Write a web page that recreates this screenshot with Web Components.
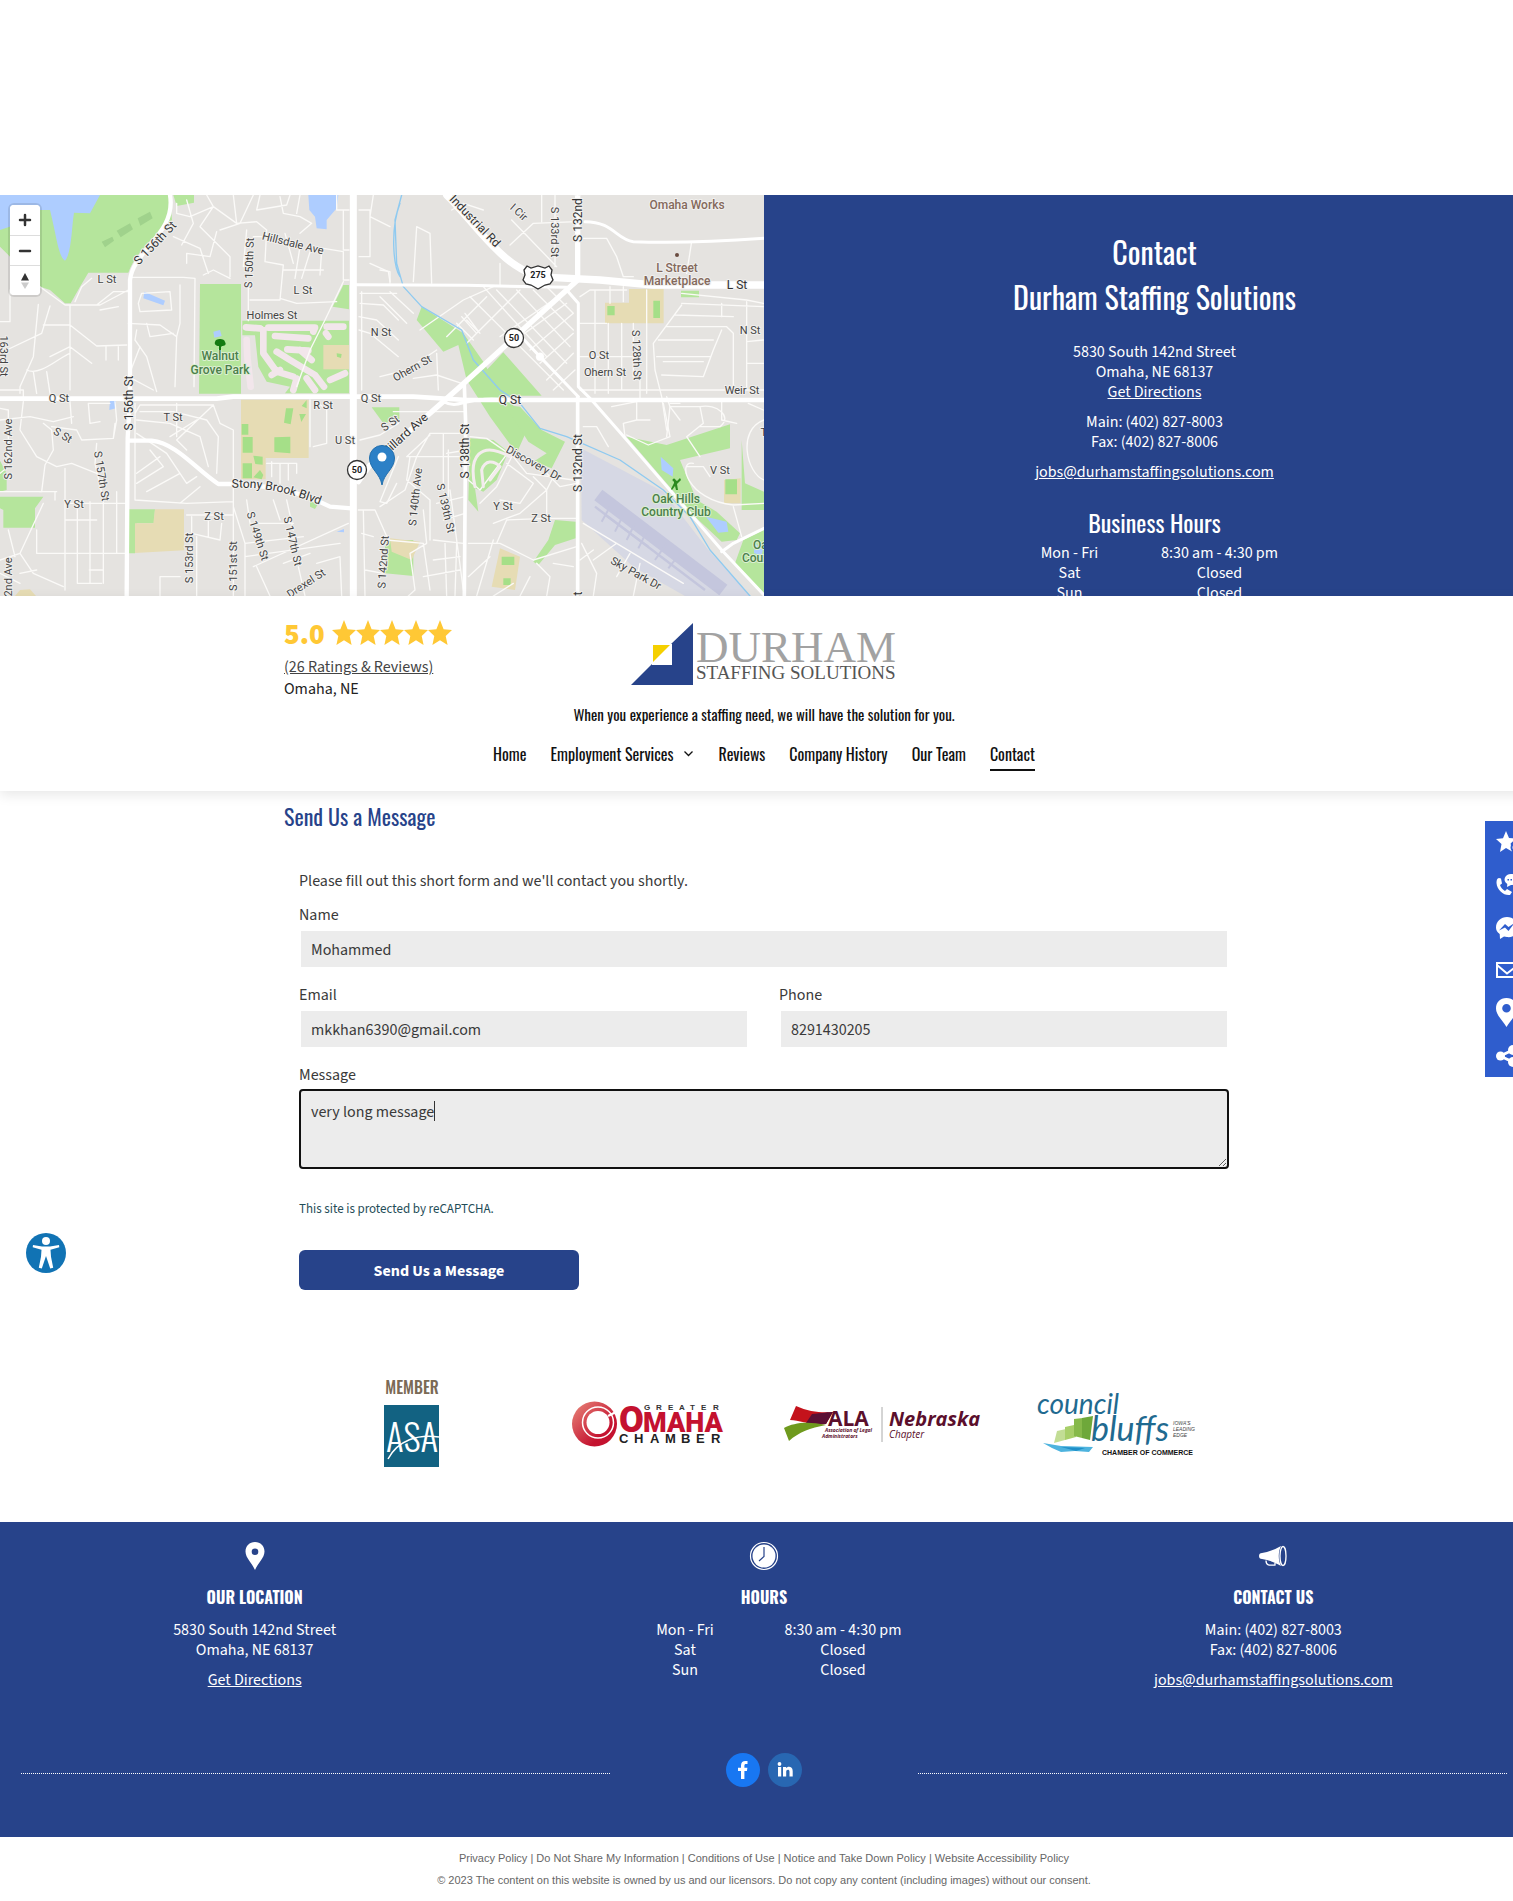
<!DOCTYPE html>
<html lang="en">
<head>
<meta charset="utf-8">
<meta name="viewport" content="width=device-width, initial-scale=1">
<title>Contact | Durham Staffing Solutions</title>
<style>
:root{--blue:#27438a;--rail:#2f5dcd;--body:"Source Sans Pro","Source Sans 3","Noto Sans CJK SC",sans-serif;--head:"Oswald","Liberation Sans Narrow","Noto Sans CJK SC",sans-serif}
html{overflow-x:hidden;background:#fff}
body{margin:0;width:calc(100% + 15px);position:relative;overflow-x:hidden;font:16px/20px var(--body);color:#3a3a3a}
main{display:block;padding-top:195px}
.top{display:grid;grid-template:401px / 1fr 1fr;overflow:hidden}
</style>
</head>
<body>
<main>
  <div class="top"><area-map></area-map><contact-panel></contact-panel></div>
  <site-header></site-header>
  <message-form></message-form>
  <partner-logos></partner-logos>
</main>
<site-footer></site-footer>
<legal-links></legal-links>
<action-rail></action-rail>
<access-button></access-button>

<script>
const define = (name, html, ready) => customElements.define(name, class extends HTMLElement {
  constructor() {
    super();
    const t = document.createElement('template');
    t.innerHTML = html;
    this.attachShadow({ mode: 'open' }).append(t.content.cloneNode(true));
  }
  connectedCallback() { if (ready) ready(this, this.shadowRoot); }
});

/* ---------- map ---------- */
const labels = [
  ['S 156th St',155,48,-46,'m'],['Hillsdale Ave',293,48,14],['S 150th St',249,68,-88],['L St',107,84,0],['L St',303,95,0],
  ['Holmes St',272,120,0],['N St',381,137,0],['Walnut',220,161,0,'p'],['Grove Park',220,175,0,'p'],['Q St',59,203,0],
  ['Q St',371,203,0],['S 156th St',129,208,-90,'m'],['R St',323,210,0],['T St',173,222,0],['S St',63,240,30],
  ['U St',345,245,0],['S St',390,228,-35],['S 162nd Ave',8,254,-90],['S 157th St',102,281,81],
  ['Y St',74,309,0],['Z St',214,321,0],['S 149th St',258,341,72],['S 147th St',293,346,77],
  ['S 153rd St',189,363,-90],['S 151st St',233,371,-90],['S 142nd St',383,367,-86],['2nd Ave',8,382,-90],['Drexel St',306,388,-33],
  ['163rd St',4,161,90],['I Cir',519,17,42],['Industrial Rd',475,26,46,'m'],['S 133rd St',555,37,90],['S 132nd St',578,18,-90,'m'],
  ['Omaha Works',687,10,0,'b'],['L Street',677,73,0,'b'],['Marketplace',677,86,0,'b'],['L St',737,90,0,'m'],['N St',750,135,0],
  ['O St',599,160,0],['Ohern St',605,177,0],['S 128th St',637,160,88],['Weir St',742,195,0],['Ohern St',412,173,-29],
  ['Q St',510,205,0,'m'],['Millard Ave',404,240,-42,'m'],['S 138th St',465,256,-90,'m'],['S 132nd St',578,268,-90,'m'],
  ['Discovery Dr',534,268,29],['V St',720,275,0],['S 140th Ave',415,302,-84],['S 139th St',446,313,77],['Y St',503,311,0],
  ['Z St',541,323,0],['Oak Hills',676,304,0,'p'],['Country Club',676,317,0,'p'],['Oak Hills',777,350,0,'p'],['Country',763,363,0,'p'],
  ['Sky Park Dr',636,378,29],['T St',770,237,0],['St',578,402,-90,'m']
];
define('area-map', `
<style>
:host{display:block;position:relative;overflow:hidden;background:#e5e3e0;min-width:0}
svg.map{display:block;width:100%;height:100%}
text{font:400 11px Roboto,sans-serif;fill:#444;text-anchor:middle;paint-order:stroke;stroke:#f1f0ee;stroke-width:2px;stroke-linejoin:round}
text.m{font-size:12px;fill:#333}
text.p{font-size:12px;font-weight:500;fill:#4b7f4b;stroke:#dcefd2}
text.b{font-size:12px;font-weight:500;fill:#84695c}
text.s{font-weight:700;font-size:9px;stroke:none;fill:#222}
.zoom{position:absolute;left:10px;top:10px;display:flex;flex-direction:column;background:#fff;border-radius:4px;box-shadow:0 0 0 2px #0000001a;overflow:hidden}
button{width:30px;height:30px;padding:0;border:0;background:#fff;display:grid;place-items:center}
button+button{border-top:1px solid #ddd}
</style>
<svg class="map" viewBox="0 0 764 401" preserveAspectRatio="xMidYMid slice" role="img" aria-label="Street map of Omaha">
<g transform="scale(.33333) translate(0 -15)" fill="none" stroke-linecap="round" stroke-linejoin="round">
  <g fill="#b5e59c">
    <path d="M0 15H510L516 90C470 130 405 190 385 248H265L240 290 212 340H195L150 300 120 290 0 170Z"/>
    <path d="M520 15H582V38L530 48Z"/>
    <path d="M600 282H723V611H597Z"/>
    <path d="M1030 285H1047V358L998 350Z"/>
    <path d="M727 392H1047V610H855L870 590 800 575 775 530 765 436H727Z"/>
    <path d="M0 812L20 850V900L0 905ZM0 920H130L105 955V1013H10V960L0 955Z"/>
    <path d="M1115 652H1198V690L1150 700Z"/>
    <path d="M387 958H465L462 1000 410 1000 405 1090H387Z"/>
    <path d="M930 935L955 940 945 957 930 950ZM1155 1050H1240V1158L1155 1150Z"/>
    <path d="M1205 290L1265 350 1390 430 1450 515 1500 605 1590 700 1550 790 1470 680 1400 570 1375 465 1330 485 1250 390 1265 350Z"/>
    <path d="M1510 487L1625 617H1500L1455 545ZM1515 645L1560 650 1625 720 1695 755 1655 835 1600 815 1640 790 1585 755Z"/>
    <path d="M1410 745L1480 750 1525 785 1490 870 1450 905 1425 895 1435 965 1405 930Z"/>
    <path d="M1665 990L1727 995V1045L1665 1065 1615 1125 1600 1115 1645 1050Z"/>
    <path d="M2043 302H2097V322H2043ZM1880 740L2000 765 2190 703V775L2040 810 2090 930 2150 965 2220 1030 2210 1050 2165 1055 2090 985Z"/>
    <path d="M2225 750L2235 880 2292 905V960H2225ZM2292 1020L2230 1050 2205 1120 2292 1218Z"/>
  </g>
  <path fill="#a0d28c" d="M413 85l37-20 8 20-37 22zM350 122l40-22 9 18-37 24zM305 155l32-15 5 12-27 20z"/>
  <g fill="#e6dcb4"><path d="M723 629H926V804H797V868H723Z"/><path d="M970 465H1047V538H970Z"/><path d="M465 958H552V1081L405 1089V1000H460Z"/><path d="M60 1200L90 1198 108 1218H45Z"/><path d="M1815 400V338H1887V297H1991V400ZM1500 1075L1560 1100 1545 1200 1475 1190ZM1170 1045L1260 1055 1235 1110 1175 1085ZM2172 870L2222 865V940H2172Z"/></g>
  <g fill="#a5df88"><path d="M725 702h20v32h-20zM728 741h30v47h-30zM728 820h28v45h-28zM760 797l28 3v24l-22-2zM823 742l48-2v50l-48-4zM858 655h22l-8 48-20-5zM905 648l15-18v25zM898 672h20l-14 24zM760 862l20-22 10 15-5 13zM1010 490l15 2-2 12-12-4z"/><path d="M1822 348h22v28h-22zM1960 332h20v52h-20zM1505 1100h38v25h-38zM1510 1165h22v20h-22zM2176 868h35v45h-35z"/></g>
  <g fill="#aecdff"><path d="M0 15H300L270 70 222 68C215 110 215 190 195 212 175 200 170 140 150 60L95 60 60 100 0 120Z"/><path d="M925 15H1015L1010 55 980 90 980 118 950 115 945 80 928 60Z"/><path d="M433 305L495 332 490 346 430 325Z"/><path d="M640 425l20-5 5 18-22 5z"/><path d="M330 630h18v25l-20 5z"/><path d="M1010 1025l22-8v10z"/><path d="M1982 800L2020 835 2018 860 1985 840ZM2118 980L2180 995 2185 1025 2155 1028ZM2262 1060L2290 1075 2285 1095 2262 1090Z"/></g>
  <g fill="#d6d8e4"><path d="M1743 775L1990 905 2125 1080 2250 1218H2055L1900 1130 1745 990Z"/></g>
  <g stroke="#c4c6dd" stroke-width="28" stroke-linecap="butt"><path d="M1795 915L2170 1200" stroke-width="40"/><path d="M1785 950L2115 1200" stroke-width="7"/><path d="M1830 950l-25 45M1870 975l-25 50M1905 1000l-25 50M1940 1025l-25 50M1815 975l130 95M2000 1060l-35 50M2040 1090l-35 45" stroke-width="6"/></g>
  <g stroke="#f2e6eb" stroke-width="20"><path d="M738 412L780 415M805 413H945L940 425M825 438L925 445M830 485L870 510L945 555 972 590M862 478L925 482M790 420V490L830 545 880 560M815 555L840 540M900 480L935 510M880 600L890 565M920 565L945 600M990 570L1035 550M980 410H1030M978 430L985 440M740 450L742 500 752 590"/></g>
  <g stroke="#fbfaf8" stroke-width="4">
    <path d="M120 290L195 345H300L385 300M225 335L245 290 275 265M0 395H30V300M115 343L100 500 60 590V610M130 405H210L290 468 380 465M210 345V600M150 348L125 430 20 480M150 500L210 470 275 520M80 540C120 560 180 500 210 490M100 545L110 610M140 545L150 610M290 345L340 305 385 305M300 360L355 350M318 470V510M355 467V510M0 600H70V630"/>
    <path d="M395 262H550L585 265 582 590M415 340L425 310 510 305 515 360 420 365ZM385 400L480 405 530 440 525 590M410 420L405 450 440 500 470 605M440 400L450 440 520 430M540 285V400L530 440M420 470L385 560 460 600"/>
    <path d="M530 40V70L570 80 640 50 710 100 770 95 800 120M520 140L600 175 625 250M560 30L580 100 545 165M620 15L640 50 600 110 690 200 690 260M700 15L710 100M760 15L720 100 660 120M780 15L770 60 860 45 870 15M840 20L850 70 900 80 935 100 900 130M650 125L630 200 560 190 560 220M740 120L730 230M800 120L795 215 850 225 840 330 750 330M855 130L880 220M900 170L885 265M935 170L905 265M965 180L960 255M900 15L890 70M795 140L760 140M1047 60H1010V15M1030 60V180L1047 180M970 175L1030 185V270L1047 270M970 240L850 240M745 285V392M745 390L745 300M840 325L890 340 1010 335M1030 275L975 390M690 265L640 240 610 255M975 390L930 480 890 590"/>
    <path d="M1077 60H1110V200L1077 200M1120 15L1110 80 1170 110M1110 220L1165 245 1170 275M1085 305V600M1080 310L1190 310M1080 340L1150 345 1195 390M1077 380L1130 390 1195 450M1077 420L1110 430 1195 500"/>
    <path d="M0 655L25 660V830L0 850M0 690L90 680 160 695 220 680M70 635L60 720 110 800 170 830 215 820 290 850M130 700L155 720 160 780 135 825 125 905H0M210 635L215 700M155 710L230 720 245 750 340 745M265 640L270 700 300 695M345 635L350 690 340 745M330 640L265 640M165 905V930M290 760L285 820 310 930M340 745L345 700"/>
    <path d="M120 905L170 905M130 940L60 1090 100 1150 190 1190M195 835V1200M232 935V1180H305V1180M270 935V1180M310 935V1180M350 905V1090M195 990H290M268 1140H310M195 940H385M60 1090L0 1110M110 1020V1090H380M25 1020L45 1100M60 1150L110 1140M0 1150L60 1180"/>
    <path d="M405 640V930L560 940 700 935V720L660 700 640 645H420L405 670M420 665H520L620 690 655 740 650 850M410 690L510 700 600 740 625 830M410 730L500 790 560 880 590 860M480 800L410 850M450 780L490 830 410 880M540 850L440 905M600 890L540 940M530 640L530 740M640 645L530 750 560 780M590 690L510 740M800 820H890V850M840 820V880M815 815V860M865 820V870M740 930L750 1000 880 1000M820 930L840 990M860 930L880 1020M700 950L735 1060 735 1218M700 930V1040M560 975H700V1218M575 980L575 1030 660 1050 665 1000M625 970V1040M590 1040V1218M480 1218V1160H540M735 1060L910 1040M735 1100L1020 1060M770 1130L810 1218M850 1120L930 1090M895 1130L915 1218M760 1130L1045 1000M950 1120L1020 1100 1025 1218M950 635L980 660V760L940 770M930 630V770M1075 960L1125 960 1165 1050M1090 960L1095 1218M1080 750L1140 735 1195 700M1195 800L1140 935 1160 940 1190 880M1085 1030L1120 1040M1095 1140L1150 1150"/>
    <path d="M1240 275L1250 110 1290 130 1295 280M1140 240L1170 245V280M1355 60L1390 40 1450 60M1500 220V285M1530 165L1600 100 1730 95M1535 90L1670 230M1665 15L1665 230M1625 15V95M1750 145H1820L1850 200 1870 260H1900M2075 155L2060 250M1140 320L1220 400M1170 305L1240 370M1260 420L1390 330 1480 290M1310 480L1220 540 1140 560M1240 565L1310 555 1385 580M1310 490L1315 600"/>
    <path d="M1450 290L1640 500M1410 320L1690 600M1385 380L1430 430M1370 400L1420 450M1490 300L1700 520M1550 300L1710 470M1600 300L1720 420M1640 290L1720 370M1340 440L1460 320M1400 460L1560 300M1500 440L1660 330M1560 440L1700 340M1590 480L1720 370M1620 520L1720 430M1640 570L1720 490M1660 600L1725 540M1395 370L1440 430 1400 390"/>
    <path d="M1785 300V610M1825 400V610M1865 400V600M1900 400V560M1940 300V610M1740 400H1820M1740 500H1920M1740 600H1990M1740 320L1770 300H1880M1830 290V340M1870 290V335M2045 340L2290 350M2045 310L2240 330 2290 340M2045 345L1960 460 1965 540 1985 620 2000 720M2025 375L2200 380M2000 410H2180L2200 430V600M1975 450H2140M1970 500H2130M1985 555L2110 560 2140 480 2165 420M1990 515H2110M2165 340V380M2240 335V600M2240 455L2290 450M2240 520L2290 520M1990 600H2292M1920 560V630M2000 620L2010 650 2000 740"/>
    <path d="M1395 665H1180M1405 730L1290 730 1250 800 1215 900 1140 950M1290 735L1220 800H1400M1330 730V900M1345 780V920M1230 800L1220 870 1290 930V1050M1400 780L1340 790M1350 900L1390 1200M1310 940L1395 920M1330 990L1395 970M1270 960L1280 1060 1230 1090 1245 1200 1225 1218M1300 1050L1390 1060M1335 1060L1340 1218M1370 1060L1365 1218M1300 1110L1380 1100M1270 1160L1380 1140M1160 1050L1270 1060 1290 1200"/>
    <path d="M1405 870L1440 900 1500 820 1530 780M1410 740L1460 745 1540 800 1580 850 1720 870M1540 790L1490 890 1440 940M1520 820L1600 880 1560 940 1500 930M1600 860L1640 900 1560 970 1480 1000M1660 860L1640 900 1640 990M1640 850L1680 890 1730 880M1405 1060H1500L1600 1110 1730 1070M1490 1060L1520 990 1640 985 1730 985M1610 1120L1650 1160 1640 1218M1480 1050L1430 1218M1405 1160L1470 1100M1660 1120L1720 1130M1590 1160L1560 1218M1540 1180L1480 1218"/>
    <path d="M1750 710H1790L1825 770M1835 650L1910 635V690L1870 700 1875 740M1910 690H1950M1990 640L2010 740 1945 765 1880 735M2010 650H2100L2110 700 2060 740 2100 800M2100 650C2150 640 2200 680 2160 710L2100 710M2165 630V690L2210 700M2040 690L2010 650M2040 640H2010M2080 820C2030 810 2060 930 2200 945L2292 940M2060 830L2110 830 2130 860M2245 640L2290 660M2292 690C2210 720 2240 850 2292 870M1750 1000L1850 1060 1950 1120 2050 1180M1745 1060L1790 1150 1780 1218M1780 1080L1740 1110M1850 1060L1780 1110M1890 1090L1850 1160M1920 1120L1900 1218M2200 950L2225 1040"/>
  </g>
  <g stroke="#f4ecee" stroke-width="9"><path d="M1425 890C1405 800 1440 750 1530 800M1450 890L1445 840C1455 810 1480 810 1500 830L1470 870"/></g>
  <g stroke="#8fcaf0" stroke-width="4"><path d="M1205 15L1185 90 1190 220 1210 290 1265 350 1385 420 1420 510 1500 600 1560 640 1620 715 1700 740 1860 810 1990 900 2070 980 2130 1080 2250 1218M1200 40C1170 120 1180 230 1200 260"/></g>
  <g stroke="#fff">
    <path d="M1060 15V1218" stroke-width="21" stroke-linecap="butt"/>
    <path d="M510 15C530 130 400 180 390 270V620L383 745 380 1218" stroke-width="13"/>
    <path d="M385 752H455C530 760 590 840 655 882H700C860 890 930 920 990 950L1055 955" stroke-width="13"/>
    <path d="M0 626H650L700 620H1240L1400 630H2292" stroke-width="14"/>
    <path d="M1070 284L1400 286 1700 292" stroke-width="9"/>
    <path d="M1340 15C1420 90 1520 260 1650 262L1800 270 1960 285H2292" stroke-width="22"/>
    <path d="M1733 15V270L1380 590 1290 670 1190 755 1110 825 1075 875" stroke-width="16"/>
    <path d="M1550 425L1620 500 1735 620M1700 300L1735 340V590L1775 630 1880 750 2165 1080 2292 1215" stroke-width="9"/>
    <path d="M1733 620V1218M1393 585L1397 700 1393 1218" stroke-width="11"/>
    <path d="M1330 635C1380 660 1390 620 1500 628" stroke-width="9"/>
    <path d="M1755 95C1840 95 1850 150 1900 155 2020 160 2150 155 2292 145M2165 1085L2200 1060 2292 1015" stroke-width="9"/>
    <circle cx="1620" cy="500" r="12" fill="#fff"/>
  </g>
</g>
<g class="labels"></g>
<path id="brook" d="M226 293C262 291 288 297 325 312" fill="none"/>
<text class="m" text-anchor="start"><textPath href="#brook" startOffset="50%">Stony Brook Blvd</textPath></text>
<g><path d="M215 147c0-4 10-4 10 0 2 3-1 4-3 4l-1 1v3h-2v-4c-3 0-5-2-4-4z" fill="#157a12"/><path d="M674 284l3 2 3-3 1 2-4 4 1 6h-2l-1-4-3 4-1-1 3-6z" fill="#2d8a1f"/><circle cx="674" cy="285" r="1.500" fill="#2d8a1f"/></g>
<circle cx="677" cy="60" r="2" fill="#6a4c40"/>
<g fill="#fff" stroke="#333" stroke-width="1.300"><circle cx="357" cy="275" r="9.500"/><circle cx="514" cy="143" r="9.500"/><path d="M527 71l4 2 7-2 7 2 4-2 3 4-1 5 2 5-3 4-5 1-7 4-7-4-5-1-3-4 2-5-1-5z"/></g>
<text class="s" x="357" y="278">50</text><text class="s" x="514" y="146">50</text><text class="s" x="538" y="83">275</text>
<path d="M382 290C380 278 369.500 274 369.500 263a12.500 12.500 0 0 1 25 0c0 11-10.500 15-12.500 27z" fill="#2c80c6" stroke="#226fae"/><circle cx="382" cy="262" r="4.500" fill="#fff"/>
</svg>
<div class="zoom">
<button aria-label="Zoom in"><svg width="14" height="14"><path d="M7 2v10M2 7h10" stroke="#333" stroke-width="2.500" stroke-linecap="round"/></svg></button>
<button aria-label="Zoom out"><svg width="14" height="14"><path d="M2 7h10" stroke="#333" stroke-width="2.500" stroke-linecap="round"/></svg></button>
<button aria-label="Reset bearing"><svg width="14" height="18"><path d="M3 8.500h8L7 1z" fill="#333"/><path d="M3 10.500h8L7 17z" fill="#ccc"/></svg></button>
</div>`, (el, root) => {
  root.querySelector('.labels').innerHTML = labels.map(([t, x, y, r, c]) =>
    `<text class="${c || ''}" transform="translate(${x} ${y}) rotate(${r})" y="4">${t}</text>`).join('');
});

/* ---------- shared pieces ---------- */
define('hours-table', `
<style>
:host{display:block}
table{width:100%;border-collapse:collapse;table-layout:fixed;font:inherit}
th,td{padding:0;font-weight:400;text-align:center}
col:first-child{width:var(--day,50%)}
</style>
<table><colgroup><col><col></colgroup>
<tr><th scope="row">Mon - Fri</th><td>8:30 am - 4:30 pm</td></tr>
<tr><th scope="row">Sat</th><td>Closed</td></tr>
<tr><th scope="row">Sun</th><td>Closed</td></tr></table>`);

define('contact-panel', `
<style>
:host{display:block;background:var(--blue);color:#fff;text-align:center;padding:34px 0 0 17px;min-width:0}
h1,h2{font-family:var(--head);font-weight:400;margin:0}
h1{font-size:30px;line-height:45px}
h2{font-size:24px;line-height:36px;margin-top:22px}
p{margin:10px 0 0}
h1+p{margin-top:23px}
a{color:inherit}
hours-table{width:300px;margin:3px auto 0;--day:130px}
</style>
<h1>Contact<br>Durham Staffing Solutions</h1>
<p>5830 South 142nd Street<br>Omaha, NE 68137<br><a href="#">Get Directions</a></p>
<p>Main: (402) 827-8003<br>Fax: (402) 827-8006</p>
<p><a href="#">jobs@durhamstaffingsolutions.com</a></p>
<h2>Business Hours</h2>
<hours-table></hours-table>`);

/* ---------- header ---------- */
define('star-rating', `
<style>
:host{display:flex;flex-direction:column;align-items:flex-start;padding-top:1px}
.score{display:flex;align-items:center;gap:7px;color:#ffc835;font-size:29px;font-weight:900;line-height:32px}
b{font-weight:900}
a{color:#444;margin-top:5px;line-height:22px}
span{color:#222;line-height:22px}
svg{overflow:visible}
</style>
<div class="score"><b>5.0</b><svg width="120" height="26" viewBox="0 0 120 26" fill="#ffc835" role="img" aria-label="5 stars"></svg></div>
<a href="#">(26 Ratings &amp; Reviews)</a>
<span>Omaha, NE</span>`, (el, root) => {
  root.querySelector('svg').innerHTML = [0,1,2,3,4].map(i =>
    `<path transform="translate(${i * 24} 0)" d="M12-2l3.600 9.200 8.400.8-6.300 6 1.900 9-7.600-4.700L4.400 23l1.900-9L0 8l8.400-.8z"/>`).join('');
});

define('main-nav', `
<style>
:host{display:block}
nav{display:flex;justify-content:center;gap:24px}
a{color:#111;text-decoration:none;font:400 16px/26px var(--head);padding-bottom:2px;border-bottom:2px solid transparent;white-space:nowrap;display:flex;align-items:center;gap:10px}
a[aria-current]{border-color:#111}
</style>
<nav aria-label="Main"><a href="#">Home</a><a href="#">Employment Services <svg width="11" height="8" viewBox="0 0 11 8"><path d="M1.500 1.500l4 4 4-4" fill="none" stroke="#111" stroke-width="1.300"/></svg></a><a href="#">Reviews</a><a href="#">Company History</a><a href="#">Our Team</a><a href="#" aria-current="page">Contact</a></nav>`);

define('site-header', `
<style>
:host{display:block;position:relative;height:195px;background:#fff;box-shadow:0 4px 12px #00000018}
.wrap{max-width:960px;margin:0 auto;display:grid;grid-template-columns:1fr 266px 1fr;padding-top:22px;height:80px}
.logo,.logo svg{display:block}
p{margin:5px 0 16px;text-align:center;color:#111;font:400 15px/22px var(--head)}
</style>
<div class="wrap"><star-rating></star-rating>
<a class="logo" href="#" aria-label="Durham Staffing Solutions"><svg width="266" height="68" viewBox="0 0 266 68">
<path fill="#27438a" d="M62 5v62H0l21-21h19V26z"/><path fill="#fff" d="M21 26h20v21H21z"/><path fill="#f5d000" d="M22 27h17L22 44z"/>
<text x="65" y="44" font-family="Liberation Serif" font-size="45" fill="#a2a2a2">DURHAM</text>
<text x="65" y="61" font-family="Liberation Serif" font-size="19" fill="#555">STAFFING SOLUTIONS</text></svg></a><span></span></div>
<p>When you experience a staffing need, we will have the solution for you.</p>
<main-nav></main-nav>`);

/* ---------- form ---------- */
define('form-field', `
<style>
:host{display:block;min-width:0}
label{display:block;line-height:24px;margin-bottom:2px}
.box{position:relative}
input,textarea{display:block;box-sizing:border-box;width:100%;border:2px solid #fff;background:#ececec;color:#3a3a3a;font:16px/22px var(--body);padding:6px 10px 4px;margin:0;border-radius:0;outline:none}
input{height:40px}
textarea{height:80px;padding:10px 10px 8px;border:2px solid #111;border-radius:4px;resize:vertical;caret-color:transparent}
i{position:absolute;left:135px;top:12px;width:1px;height:20px;background:#333}
</style>
<label for="f"></label><div class="box"></div>`, (el, root) => {
  if (root.querySelector('#f')) return;
  const type = el.getAttribute('type') || 'text';
  const f = document.createElement(type === 'area' ? 'textarea' : 'input');
  if (type !== 'area') f.type = type;
  f.id = 'f';
  f.value = el.getAttribute('value');
  root.querySelector('label').textContent = el.getAttribute('label');
  const box = root.querySelector('.box');
  box.append(f);
  if (type === 'area') box.append(document.createElement('i'));
});

define('message-form', `
<style>
:host{display:block;max-width:960px;margin:0 auto;padding-top:7px}
h2{margin:0;font:400 22px/36px var(--head);color:var(--blue)}
form{padding:35px 15px 0;display:flex;flex-direction:column}
p{margin:0 0 10px;line-height:24px}
.row{display:grid;grid-template-columns:1fr 1fr;gap:30px;margin:14px 0}
small{display:block;font-size:13px;line-height:18px;color:#1f4d58;margin:31px 0 32px}
button{align-self:flex-start;width:280px;height:40px;padding:2px 0 0;border:0;border-radius:6px;background:var(--blue);color:#fff;font:700 16px/20px var(--body)}
</style>
<h2>Send Us a Message</h2>
<form onsubmit="return false">
<p>Please fill out this short form and we'll contact you shortly.</p>
<form-field label="Name" value="Mohammed"></form-field>
<div class="row"><form-field label="Email" type="email" value="mkkhan6390@gmail.com"></form-field><form-field label="Phone" type="tel" value="8291430205"></form-field></div>
<form-field label="Message" type="area" value="very long message"></form-field>
<small>This site is protected by reCAPTCHA.</small>
<button type="submit">Send Us a Message</button>
</form>`);

/* ---------- partners ---------- */
define('partner-logos', `
<style>
:host{display:grid;grid-template-columns:repeat(4,1fr);max-width:940px;height:92px;margin:88px auto 52px;align-items:center;justify-items:center}
svg{display:block;overflow:visible}
</style>
<svg width="56" height="88" viewBox="0 0 56 88" role="img"><text x="28" y="14" text-anchor="middle" font-family="Oswald" font-weight="500" font-size="16" fill="#7b6a55">MEMBER</text><path fill="#126282" d="M0 25h55v62H0z"/><text x="28" y="72" text-anchor="middle" font-family="Oswald" font-weight="300" font-size="37" fill="#fff">ASA</text><path d="M4 79C14 60 34 54 55 57" fill="none" stroke="#fff" stroke-width="1.500"/></svg>
<svg width="150" height="46" viewBox="0 0 150 46" role="img"><defs><linearGradient id="r" x1="0" y1="0" x2="1" y2="1"><stop offset="0" stop-color="#e9897c"/><stop offset=".7" stop-color="#c4122f"/></linearGradient></defs><circle cx="22.500" cy="23" r="22.500" fill="url(#r)"/><circle cx="26" cy="21.500" r="15.500" fill="none" stroke="#fff" stroke-width="1.500"/><circle cx="26" cy="21.500" r="11.500" fill="#fff"/><path d="M36 15l8-4" stroke="#fff" stroke-width="2"/>
<text x="47" y="31" font-family="Roboto" font-weight="900" font-size="36" fill="#c4122f" stroke="#fff" paint-order="stroke">O</text><text x="71" y="31" font-family="Roboto" font-weight="900" font-size="27" fill="#c4122f">MAHA</text>
<text y="9" font-family="Liberation Sans" font-weight="700" font-size="8" fill="#333" x="72 84 96 107 118 129 141">GREATER</text><text y="42" font-family="Liberation Sans" font-weight="700" font-size="13" fill="#222" x="47 62 78 93 109 124 139">CHAMBER</text></svg>
<svg width="196" height="38" viewBox="0 0 196 38" role="img"><path d="M12 1C25 7 38 8 49 7L42 19C28 21 16 15 6 15z" fill="#c4121b"/><path d="M28 9C38 8 45 7 49 7L42 19C34 20 28 19 22 18z" fill="#5b0f34"/><path d="M0 23C10 18 22 16 42 20 26 23 15 27 5 36z" fill="#6f9a1e"/>
<text x="44" y="21" font-family="Open Sans" font-weight="700" font-size="21" fill="#5b0f2c">ALA</text><text x="41" y="27" font-family="Open Sans" font-style="italic" font-weight="700" font-size="5" fill="#5b0f2c">Association of Legal</text><text x="38" y="33" font-family="Open Sans" font-style="italic" font-weight="700" font-size="5" fill="#5b0f2c">Administrators</text><path d="M98 2v35" stroke="#aaa"/>
<text x="105" y="21" font-family="Open Sans" font-style="italic" font-weight="700" font-size="20" fill="#5b0f2c">Nebraska</text><text x="105" y="33" font-family="Open Sans" font-style="italic" font-size="10" fill="#5b0f2c">Chapter</text></svg>
<svg width="160" height="66" viewBox="0 0 160 66" role="img"><path d="M20 40l9-2-1 11-11 3z" fill="#c2dd95"/><path d="M28 36l9-2 2 12-11 3z" fill="#a8cf6a"/><path d="M37 28l9-1-1 20-8-2z" fill="#86b94a"/><path d="M45 27l11-2-3 24-8-2z" fill="#6ea83a"/><path d="M6 52l18 3 32 1-4 5-14-1-14 1-9-4z" fill="#4db3de"/><path d="M24 56l24 1-9 3z" fill="#1f8fc8"/>
<text x="0" y="23" font-family="Lato" font-style="italic" font-size="28" fill="#1f6a90">council</text><text x="54" y="50" font-family="Lato" font-style="italic" font-size="34" fill="#1f6a90">bluffs</text>
<text font-family="Liberation Sans" font-style="italic" font-size="5" fill="#444"><tspan x="136" y="34">IOWA'S</tspan><tspan x="136" y="40">LEADING</tspan><tspan x="136" y="46">EDGE</tspan></text><text x="65" y="64" font-family="Liberation Sans" font-weight="700" font-size="7" fill="#111">CHAMBER OF COMMERCE</text></svg>`);

/* ---------- footer ---------- */
define('footer-column', `
<style>
:host{display:flex;flex-direction:column;align-items:center;text-align:center}
h3{margin:13px 0 10px;font:700 16px/26px var(--head);color:#fff}
</style>
<slot name="icon"></slot><h3><slot name="title"></slot></h3><slot></slot>`);

define('site-footer', `
<style>
:host{display:block;background:var(--blue);color:#fff}
.cols{display:grid;grid-template-columns:repeat(3,1fr);padding-top:19px;height:198px}
p{margin:0 0 10px}
a{color:inherit}
hours-table{width:316px}
.social{display:grid;grid-template-columns:1fr 308px 1fr;align-items:center;padding:14px 21px 50px}
hr{box-sizing:border-box;width:100%;margin:6px 0 0;border:0;border-top:1px dotted #fff}
.icons{display:flex;justify-content:center;gap:8px}
.icons a,.icons svg{display:block}
</style>
<div class="cols">
<footer-column><svg slot="icon" width="30" height="30" viewBox="0 0 30 30"><path fill="#fff" fill-rule="evenodd" d="M15 1c5.500 0 9.500 4 9.500 9.500C24.500 17 18 22 15 29 12 22 5.500 17 5.500 10.500 5.500 5 9.500 1 15 1zm0 6.500a3.300 3.300 0 1 0 0 6.600 3.300 3.300 0 0 0 0-6.600z"/></svg><span slot="title">OUR LOCATION</span><p>5830 South 142nd Street<br>Omaha, NE 68137</p><p><a href="#">Get Directions</a></p></footer-column>
<footer-column><svg slot="icon" width="30" height="30" viewBox="0 0 30 30"><circle cx="15" cy="15" r="13.500" fill="none" stroke="#fff" stroke-width="1.200"/><circle cx="15" cy="15" r="11.500" fill="#fff"/><path d="M15 6v9.500L10 20" fill="none" stroke="#27438a" stroke-width="1.200"/></svg><span slot="title">HOURS</span><hours-table></hours-table></footer-column>
<footer-column><svg slot="icon" width="30" height="30" viewBox="0 0 30 30"><path fill="#fff" d="M23 5C16 9 10 11 4 12a3 3 0 0 0 0 6c6 1 13 3 19 7-3-6-3-14 0-20z"/><ellipse cx="25" cy="15" rx="3" ry="9.500" fill="none" stroke="#fff" stroke-width="1.300"/><path d="M8 19.500c0 5 3 5 9 4.500v-2" fill="none" stroke="#fff" stroke-width="1.300"/></svg><span slot="title">CONTACT US</span><p>Main: (402) 827-8003<br>Fax: (402) 827-8006</p><p><a href="#">jobs@durhamstaffingsolutions.com</a></p></footer-column>
</div>
<div class="social"><hr><div class="icons">
<a href="#" aria-label="Facebook"><svg width="34" height="34" viewBox="0 0 34 34"><circle cx="17" cy="17" r="17" fill="#1877f2"/><path d="M15 26v-8h-3v-3.300h3V12.500c0-3.200 1.700-4.500 4.500-4.500h2v3h-1.500c-1.200 0-1.600.6-1.600 1.700v2h3l-.5 3.300h-2.500v8z" fill="#fff"/></svg></a>
<a href="#" aria-label="LinkedIn"><svg width="34" height="34" viewBox="0 0 34 34"><circle cx="17" cy="17" r="17" fill="#2867b2"/><circle cx="11.500" cy="11" r="1.900" fill="#fff"/><path d="M10 14h3.200v9.500H10zM15 14h3v1.300c1.500-2.300 6.700-2.200 6.700 2.700v5.500h-3.200v-4.800c0-2.700-3.300-2.500-3.300 0v4.800H15z" fill="#fff"/></svg></a>
</div><hr></div>`);

define('legal-links', `
<style>
:host{display:block;text-align:center;font:11px/22px "Liberation Sans",Arial,sans-serif;color:#666;padding:10px 0}
p{margin:0}
a{color:inherit;text-decoration:none}
</style>
<p><a href="#">Privacy Policy</a> | <a href="#">Do Not Share My Information</a> | <a href="#">Conditions of Use</a> | <a href="#">Notice and Take Down Policy</a> | <a href="#">Website Accessibility Policy</a></p>
<p>© 2023 The content on this website is owned by us and our licensors. Do not copy any content (including images) without our consent.</p>`);

/* ---------- overlays ---------- */
define('action-rail', `
<style>
:host{position:absolute;right:0;top:821px;width:43px;height:256px;background:var(--rail);display:flex;flex-direction:column}
a{flex:1;display:flex;align-items:center;padding-left:11px;min-height:0}
svg{display:block}
</style>
<a href="#" aria-label="Reviews"><svg width="22" height="24" viewBox="0 0 22 24" fill="#fff"><path d="M10 1l3 7 7 .5-5.400 5 1.400 8L10 18l-6 4 1.500-8L0 9l7-.8z"/><circle cx="19.500" cy="17.500" r="4" stroke="#2f5dcd" stroke-width="2"/></svg></a>
<a href="#" aria-label="Call or text"><svg width="22" height="24" viewBox="0 0 22 24" fill="#fff"><path d="M3 5l2 .5 1 5-2 1.500c1 3 2.500 4.500 5 6l2-2 5 3-2 3c-6 1-13-5-13.500-12C.500 7 1 5.500 3 5z"/><path d="M15 1c4 0 7 2.200 7 5.500S19 12 15 12l-4 2 .3-3C6 7.500 9 1 15 1z"/><path d="M11.500 6h1.500v1.500h-1.500zM14.500 6h1.500v1.500h-1.500z" fill="#2f5dcd"/></svg></a>
<a href="#" aria-label="Messenger"><svg width="22" height="24" viewBox="0 0 22 24" fill="#fff"><path d="M11 1c6 0 11 4.500 11 10.500S17 22 11 21l-3-.5L4 23l-.3-5C1 16 0 14 0 11.500 0 5.500 5 1 11 1z"/><path d="M3 14.500l6-6.500 3.500 3 6-4-6 8-3.500-3.500z" fill="#2f5dcd"/></svg></a>
<a href="#" aria-label="Email"><svg width="22" height="24" viewBox="0 0 22 24"><path d="M1 5h22v14H1zM1 7l10 8.500L22 7" fill="none" stroke="#fff" stroke-width="2"/></svg></a>
<a href="#" aria-label="Directions"><svg width="22" height="30" viewBox="0 0 22 30"><path fill="#fff" fill-rule="evenodd" d="M10.500 0C17 0 21 4.500 21 10.500 21 17 14 23 10.500 29 7 23 0 17 0 10.500 0 4.500 4 0 10.500 0zm0 6a4.300 4.300 0 1 0 0 8.600 4.300 4.300 0 0 0 0-8.600z"/></svg></a>
<a href="#" aria-label="Share"><svg width="22" height="24" viewBox="0 0 22 24" fill="#fff"><circle cx="4.500" cy="12" r="4.500"/><circle cx="17" cy="6" r="5"/><circle cx="17" cy="18" r="5"/><path d="M4 12l13-6M4 12l13 6" stroke="#fff" stroke-width="3"/></svg></a>`);

define('access-button', `
<style>
:host{position:absolute;left:26px;top:1233px}
button{padding:0;border:0;background:none;display:block}
svg{display:block}
</style>
<button aria-label="Accessibility options"><svg width="40" height="40" viewBox="0 0 40 40"><circle cx="20" cy="20" r="20" fill="#1173b4"/><circle cx="20" cy="8" r="4" fill="#fff"/><path d="M7 12l9 1.500h8L33 12l.3 2.200-8.800 2.500.5 7 2.200 11-3 .7L20 23l-4.200 12.400-3-.7 2.200-11 .5-7-8.800-2.500z" fill="#fff"/></svg></button>`);
</script>
</body>
</html>
